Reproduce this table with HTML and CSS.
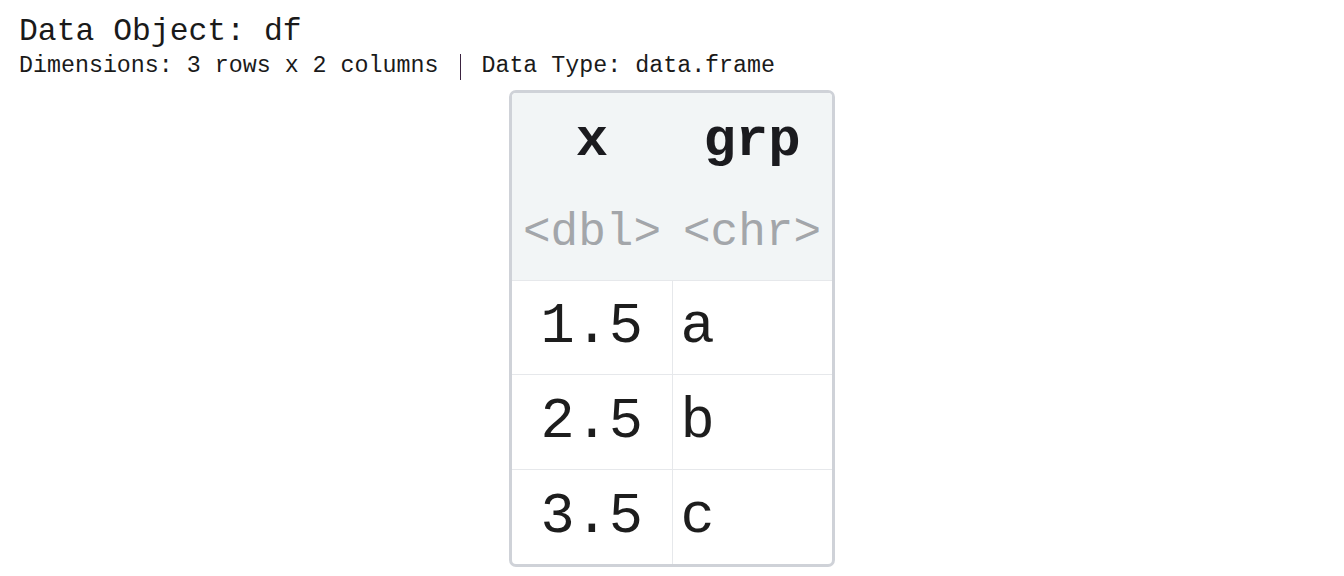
FILE: index.html
```html
<!DOCTYPE html>
<html lang="en">
<head>
    <meta charset="UTF-8">
    <meta name="viewport" content="width=device-width, initial-scale=1.0">
    <title>Data Object: df</title>
    <link rel="stylesheet" href="styles.css">
</head>
<body>
    <div class="object-info">
        <h1 class="object-title">Data Object: df</h1>
        <div class="object-meta">
            <span>Dimensions: 3 rows x 2 columns</span>
            <span class="meta-sep"></span>
            <span>Data Type: data.frame</span>
        </div>
    </div>

    <div class="table-wrap">
        <div class="table-frame">
            <table class="data-table">
                <thead>
                    <tr class="col-names">
                        <th>x</th>
                        <th>grp</th>
                    </tr>
                    <tr class="col-types">
                        <th>&lt;dbl&gt;</th>
                        <th>&lt;chr&gt;</th>
                    </tr>
                </thead>
                <tbody>
                    <tr>
                        <td class="num">1.5</td>
                        <td>a</td>
                    </tr>
                    <tr>
                        <td class="num">2.5</td>
                        <td>b</td>
                    </tr>
                    <tr>
                        <td class="num">3.5</td>
                        <td>c</td>
                    </tr>
                </tbody>
            </table>
        </div>
    </div>
</body>
</html>
```

FILE: styles.css
```css
* {
    box-sizing: border-box;
}

body {
    margin: 0;
    font-family: 'Liberation Mono', 'Courier New', monospace;
    color: #1a1a1a;
    background-color: #ffffff;
}

.object-info {
    padding: 14px 19px 0;
}

.object-title {
    margin: 0;
    font-size: 31.4px;
    font-weight: normal;
    line-height: 35px;
}

.object-meta {
    display: flex;
    align-items: center;
    margin-top: 4px;
    font-size: 23.3px;
    line-height: 27px;
}

.meta-sep {
    width: 1px;
    height: 26px;
    margin: 0 20px 0 22px;
    background-color: #3b2340;
}

.table-wrap {
    display: flex;
    justify-content: center;
    margin-top: 10px;
}

.table-frame {
    border: 3px solid #cfd2d8;
    border-radius: 7px;
    overflow: hidden;
}

.data-table {
    border-collapse: collapse;
}

.data-table th,
.data-table td {
    width: 160px;
    padding: 0 8px;
    vertical-align: middle;
}

.data-table thead th {
    background-color: #f2f5f6;
    text-align: center;
}

.col-names th {
    height: 94px;
    font-size: 54px;
    font-weight: bold;
    color: #1b1b1f;
}

.col-types th {
    height: 93px;
    font-size: 46px;
    font-weight: normal;
    color: #a3a6aa;
    border-bottom: 1px solid #e6e8eb;
}

.data-table td {
    height: 94.5px;
    font-size: 57px;
    color: #1d1d1d;
    border-top: 1px solid #e6e8eb;
    border-left: 1px solid #e6e8eb;
}

.data-table td:first-child {
    border-left: none;
}

.data-table td.num {
    text-align: center;
}
```
